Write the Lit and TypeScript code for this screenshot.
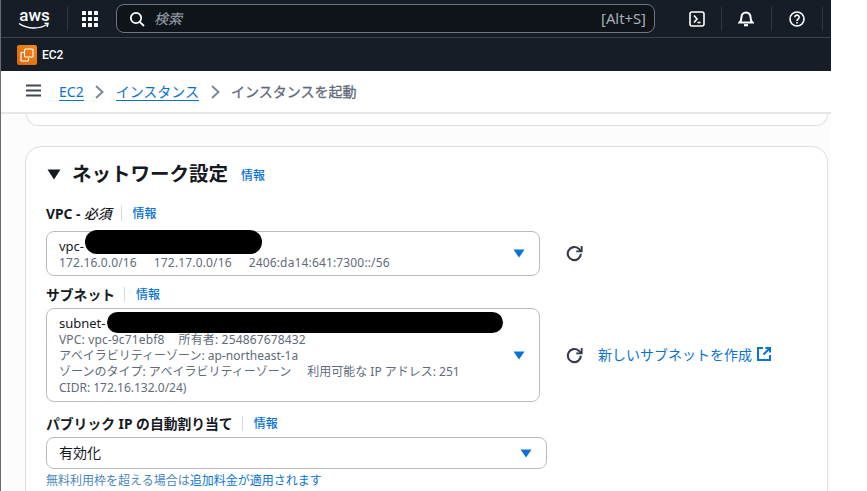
import { LitElement, html, css } from "lit";
import { customElement } from "lit/decorators.js";

const info = (cls = "") => html`<a class="info ${cls}">情報</a>`;
const caret = html`<svg class="caret" width="12" height="9" viewBox="0 0 12 9"><path d="M0.5 0.5h11L6 8.5z" fill="#0972d3"/></svg>`;
const refresh = html`<svg class="refresh" width="19" height="19" viewBox="0 0 18 18" fill="none" stroke="#353c47" stroke-width="2"><path d="M15 9.2a6.2 6.2 0 1 1-2-4.7L15.2 6.6"/><path d="M15.800 1.800v5.200h-5.200" stroke-width="1.800"/></svg>`;

@customElement("app-root")
export class AppRoot extends LitElement {
  static styles = css`
    :host { display: block; width: 867px; height: 491px; overflow: hidden; background: #fff; font-family: "Noto Sans", "Noto Sans CJK JP", sans-serif; }
    .frame { width: 831px; height: 491px; overflow: hidden; box-sizing: border-box; border-left: 1px solid #6b6b6b; background: #fcfcfc; }
    .top { height: 38px; box-sizing: border-box; background: #161d26; border-bottom: 1px solid #3a414b; display: flex; align-items: center; }
    .logo { width: 33px; margin-left: 17px; display: flex; flex-direction: column; align-items: center; color: #fff; }
    .logo b { font: 500 17px/14px Roboto, sans-serif; }
    .sep { width: 1px; height: 24px; background: #2f3741; flex: none; }
    .top .sep.a { margin-left: 16px; margin-right: 14px; }
    .grid { display: grid; grid-template-columns: repeat(3, 4px); gap: 2px; margin-right: 18px; flex: none; }
    .grid i { width: 4px; height: 4px; background: #fff; border-radius: 0.5px; }
    .search { width: 539px; flex: none; height: 29px; box-sizing: border-box; border: 1.500px solid #6f7680; border-radius: 8px; background: #0f141a; display: flex; align-items: center; padding: 0 8px 0 12px; }
    .search .ph { font-style: italic; color: #9aa0a8; font-size: 14px; margin-left: 9px; flex: 1; margin-bottom: 1px; }
    .search .key { color: #a9aeb5; font: 14.800px "Noto Sans", sans-serif; margin-bottom: 1px; }
    .tools { display: flex; align-items: center; margin-left: 34px; }
    .tools svg { display: block; flex: none; }
    .tools .sep { margin: 0 16px; }
    .tools .sep.wide { margin: 0 17px; }
    .tools .sep.end { margin: 0 0 0 17px; }
    .sub { height: 33px; background: #161d26; display: flex; align-items: center; padding-left: 16px; color: #fff; font: 500 12px Roboto, sans-serif; gap: 5px; }
    .svc { width: 20px; height: 20px; border-radius: 2px; background: linear-gradient(45deg, #d9670c, #f08a1d); display: flex; align-items: center; justify-content: center; }
    .crumbs { height: 43px; box-sizing: border-box; background: #fff; border-bottom: 2px solid #e6e6e6; display: flex; align-items: center; padding-left: 25px; font-size: 14px; color: #5f6b7a; }
    .crumbs a { color: #0972d3; border-bottom: 1.500px solid #0972d3; line-height: 17px; }
    .crumbs .chev { margin: 0 11.500px; flex: none; }
    .crumbs .burger { margin-right: 18px; margin-bottom: 2px; }
    .crumbs .now { color: #5f6b7a; -webkit-text-stroke: 0.3px #5f6b7a; margin-bottom: 2px; }
    .prev { height: 12px; margin: 0 3px 0 25px; box-sizing: border-box; border: 1px solid #dedfe0; border-top: 0; border-radius: 0 0 16px 16px; background: #fff; }
    .card { margin: 20px 3px 0 24px; background: #fff; border: 1px solid #dedfe0; border-radius: 16px; padding: 13px 20px 0; height: 400px; box-sizing: border-box; }
    h2 { margin: 0; display: flex; align-items: center; font-size: 19.500px; line-height: 28px; font-weight: 700; color: #16191f; }
    h2 svg { margin-right: 11px; margin-left: 1px; }
    .info { color: #0972d3; font-size: 12px; font-weight: 500; }
    h2 .info { margin-left: 13px; position: relative; top: 2px; }
    .label { display: flex; align-items: center; font-size: 13.800px; font-weight: 700; color: #16191f; height: 18px; }
    .label em { font-weight: 500; }
    .label .bar { width: 1px; height: 15px; background: #d5dbdb; margin: 0 11px 0 9px; }
    .row { display: flex; align-items: center; }
    .sel { width: 494px; flex: none; box-sizing: border-box; border: 1px solid #b9bcbf; border-radius: 8px; background: #fff; padding: 0 14px 0 12px; display: flex; align-items: center; justify-content: space-between; position: relative; }
    .sel .main { font-size: 13px; color: #16191f; line-height: 18px; }
    .sel .main.big { font-size: 14px; }
    .sel .d { font-size: 12px; line-height: 16px; color: #5f6b7a; white-space: pre; display: flex; }
    .d .g { margin-left: 16px; }
    .d.wide { letter-spacing: 0.15px; }
    .d.wide .g { margin-left: 17px; }
    .d.wide .g.tight { margin-left: 14px; }
    .refresh { margin-left: 25px; flex: none; }
    .new { color: #0972d3; font-size: 14px; margin-left: 14px; display: flex; align-items: center; gap: 5px; margin-bottom: 2px; }
    .mask { position: absolute; background: #000; border-radius: 12px; }
    .hint { font-size: 12px; line-height: 16px; color: #0972d3; margin-top: 4px; }
    .hint span { color: #4a86c0; }
  `;

  render() {
    return html`<div class="frame">
      <div class="top">
        <div class="logo"><b>aws</b>
          <svg width="33" height="8" viewBox="0 0 33 8" fill="none" stroke="#fff" stroke-width="1.400"><path d="M1 1.500c8 5.500 20 6 28 1"/><path d="M26.500 1.200l3.600.2-.9 3.500"/></svg>
        </div>
        <div class="sep a"></div>
        <div class="grid">${Array.from({ length: 9 }, () => html`<i></i>`)}</div>
        <div class="search">
          <svg width="16" height="16" viewBox="0 0 16 16" fill="none" stroke="#fff" stroke-width="1.800"><circle cx="7" cy="7" r="5.200"/><path d="M10.800 10.800L15 15"/></svg>
          <span class="ph">検索</span><span class="key">[Alt+S]</span>
        </div>
        <div class="tools">
          <svg width="16" height="16" viewBox="0 0 16 16" fill="none" stroke="#fff" stroke-width="1.600"><rect x="1" y="1" width="14" height="14" rx="2"/><path d="M5 4.500L8 8l-3 3.500" /><path d="M8.500 11.500h3"/></svg>
          <div class="sep"></div>
          <svg width="16" height="17" viewBox="0 0 16 17" fill="none" stroke="#fff" stroke-width="2"><path d="M1.500 12.500h13c-1.800-1.600-2-3-2-5.500a4.500 4.500 0 0 0-9 0c0 2.500-.2 3.900-2 5.500z"/><path d="M6 15.200h4" stroke-width="2.200"/></svg>
          <div class="sep wide"></div>
          <svg width="16" height="16" viewBox="0 0 16 16" fill="none" stroke="#fff" stroke-width="1.600"><circle cx="8" cy="8" r="7"/><path d="M5.800 6.300a2.200 2.200 0 1 1 3.300 1.900c-.8.500-1.100.9-1.100 1.700"/><path d="M8 11v1.600"/></svg>
          <div class="sep end"></div>
        </div>
      </div>
      <div class="sub">
        <div class="svc"><svg width="14" height="14" viewBox="0 0 14 14" fill="none" stroke="#fff" stroke-width="1.100"><rect x="4.500" y="1" width="8.500" height="8" rx="1"/><path d="M4 4.500H1.500a.5.500 0 0 0-.5.500v7.500a.5.500 0 0 0 .5.500H8a.5.500 0 0 0 .5-.5V10"/></svg></div>
        EC2
      </div>
      <div class="crumbs">
        <svg class="burger" width="15" height="13" viewBox="0 0 15 13" fill="none" stroke="#414750" stroke-width="2"><path d="M0 1.500h15M0 6.500h15M0 11.500h15"/></svg>
        <a>EC2</a>
        <svg class="chev" width="9" height="14" viewBox="0 0 9 14" fill="none" stroke="#7d8998" stroke-width="2"><path d="M1 1l6.500 6L1 13"/></svg>
        <a>インスタンス</a>
        <svg class="chev" width="9" height="14" viewBox="0 0 9 14" fill="none" stroke="#7d8998" stroke-width="2"><path d="M1 1l6.500 6L1 13"/></svg>
        <span class="now">インスタンスを起動</span>
      </div>
      <div class="prev"></div>
      <div class="card">
        <h2><svg width="14" height="11" viewBox="0 0 14 11"><path d="M0.500 0.500h13L7 10.500z" fill="#16191f"/></svg>ネットワーク設定${info()}</h2>
        <div class="label" style="margin-top:16px">VPC -&nbsp;<em><i>必須</i></em><span class="bar"></span>${info()}</div>
        <div class="row" style="margin-top:9px">
          <div class="sel" style="height:45px"><div>
            <div class="main">vpc-</div>
            <div class="d wide"><span>172.16.0.0/16</span><span class="g">172.17.0.0/16</span><span class="g">2406:da14:641:7300::/56</span></div>
            </div>${caret}
            <div class="mask" style="left:38px;top:-2px;width:177px;height:24px"></div>
          </div>
          ${refresh}
        </div>
        <div class="label" style="margin-top:9px">サブネット<span class="bar"></span>${info()}</div>
        <div class="row" style="margin-top:5px">
          <div class="sel" style="height:94px"><div>
            <div class="main">subnet-</div>
            <div class="d wide"><span>VPC: vpc-9c71ebf8</span><span class="g tight">所有者: 254867678432</span></div>
            <div class="d">アベイラビリティーゾーン: ap-northeast-1a</div>
            <div class="d"><span>ゾーンのタイプ: アベイラビリティーゾーン</span><span class="g">利用可能な IP アドレス: 251</span></div>
            <div class="d">CIDR: 172.16.132.0/24)</div>
            </div>${caret}
            <div class="mask" style="left:60px;top:3px;width:396px;height:21px"></div>
          </div>
          ${refresh}
          <span class="new">新しいサブネットを作成<svg width="14" height="14" viewBox="0 0 14 14" fill="none" stroke="#0972d3" stroke-width="2"><path d="M6 1H1v12h12V8"/><path d="M8.500 1H13v4.500M13 1L6.500 7.500"/></svg></span>
        </div>
        <div class="label" style="margin-top:12px">パブリック IP の自動割り当て<span class="bar"></span>${info()}</div>
        <div class="row" style="margin-top:5px">
          <div class="sel" style="height:32px;width:501px"><span class="main big">有効化</span>${caret}</div>
        </div>
        <div class="hint"><span>無料利用枠を超える場合は</span>追加料金が適用されます</div>
      </div>
    </div>`;
  }
}
